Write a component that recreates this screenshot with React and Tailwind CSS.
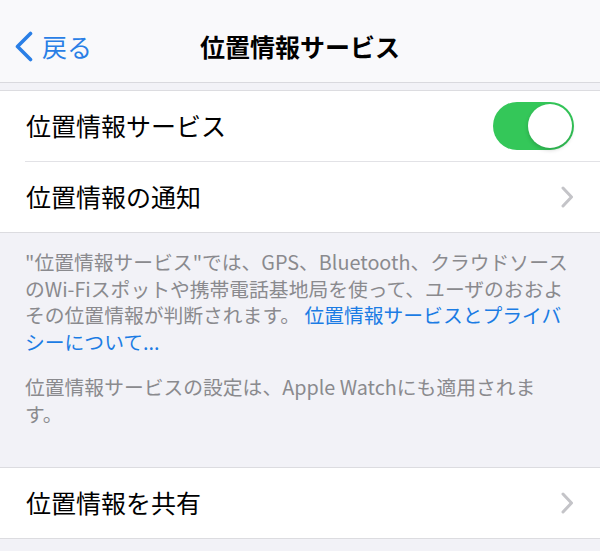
const font = { fontFamily: '"Noto Sans CJK JP", "Noto Sans", sans-serif' };

function Chevron() {
  return (
    <svg width="14" height="22" viewBox="0 0 14 22" fill="none" className="shrink-0">
      <path d="M3 2l8.5 9L3 20" stroke="#c4c4c8" strokeWidth="3" strokeLinecap="round" strokeLinejoin="round" />
    </svg>
  );
}

function Toggle() {
  return (
    <div className="w-[81px] h-[48px] rounded-full bg-[#34c759] p-[2px] flex justify-end shrink-0">
      <div className="w-[44px] h-[44px] rounded-full bg-white shadow-[0_2px_4px_rgba(0,0,0,0.18)]" />
    </div>
  );
}

export default function App() {
  return (
    <div className="w-[600px] h-[551px] overflow-hidden bg-[#f2f2f7]" style={font}>
      {/* nav bar */}
      <div className="h-[83px] pt-[10px] bg-[#f9f9fb] border-b border-[#d9d9de] grid grid-cols-[1fr_auto_1fr] items-center">
        <div className="flex items-center pl-[14px] gap-[8px] text-[#2a7fe6]">
          <svg width="20" height="31" viewBox="0 0 20 31" fill="none">
            <path d="M16.5 2.5L3.5 15.5l13 13" stroke="#2a7fe6" strokeWidth="3.6" strokeLinecap="round" strokeLinejoin="round" />
          </svg>
          <span className="text-[25px] leading-none">戻る</span>
        </div>
        <div className="text-[25px] font-bold text-black leading-none">位置情報サービス</div>
        <div />
      </div>

      <div className="h-[7px]" />

      {/* section 1 */}
      <div className="bg-white border-y border-[#dcdce0]">
        <div className="h-[70px] flex items-center justify-between pl-[26px] pr-[26px]">
          <span className="text-[25px] text-black">位置情報サービス</span>
          <Toggle />
        </div>
        <div className="ml-[25px] h-px bg-[#e2e2e6]" />
        <div className="h-[70px] flex items-center justify-between pl-[26px] pr-[26px]">
          <span className="text-[25px] text-black">位置情報の通知</span>
          <Chevron />
        </div>
      </div>

      {/* footer text */}
      <div className="px-[25px] pt-[16px] text-[19.8px] leading-[26.5px] text-[#8a8a8e] whitespace-nowrap">
        <p>
          "位置情報サービス"では、GPS、Bluetooth、クラウドソース<br />
          のWi-Fiスポットや携帯電話基地局を使って、ユーザのおおよ<br />
          その位置情報が判断されます。{' '}
          <span className="text-[#1b7ce4]">
            位置情報サービスとプライバ<br />
            シーについて...
          </span>
        </p>
        <p className="mt-[19px]">
          位置情報サービスの設定は、Apple Watchにも適用されま<br />
          す。
        </p>
      </div>

      <div className="h-[40px]" />

      {/* section 2 */}
      <div className="bg-white border-y border-[#dcdce0]">
        <div className="h-[70px] flex items-center justify-between pl-[26px] pr-[26px]">
          <span className="text-[25px] text-black">位置情報を共有</span>
          <Chevron />
        </div>
      </div>
    </div>
  );
}
